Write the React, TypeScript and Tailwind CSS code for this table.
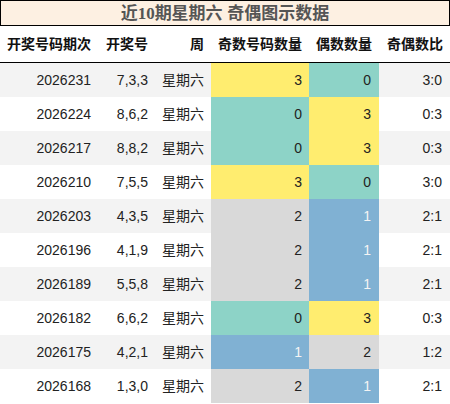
const font = { fontFamily: '"Liberation Sans", "Noto Sans CJK SC", sans-serif' };

type Row = { issue: string; nums: string; odd: number; even: number };

const rows: Row[] = [
  { issue: "2026231", nums: "7,3,3", odd: 3, even: 0 },
  { issue: "2026224", nums: "8,6,2", odd: 0, even: 3 },
  { issue: "2026217", nums: "8,8,2", odd: 0, even: 3 },
  { issue: "2026210", nums: "7,5,5", odd: 3, even: 0 },
  { issue: "2026203", nums: "4,3,5", odd: 2, even: 1 },
  { issue: "2026196", nums: "4,1,9", odd: 2, even: 1 },
  { issue: "2026189", nums: "5,5,8", odd: 2, even: 1 },
  { issue: "2026182", nums: "6,6,2", odd: 0, even: 3 },
  { issue: "2026175", nums: "4,2,1", odd: 1, even: 2 },
  { issue: "2026168", nums: "1,3,0", odd: 2, even: 1 },
];

// colour by count: 0 teal, 1 blue, 2 grey, 3 yellow
const countCls: Record<number, string> = {
  0: "bg-[#8dd3c7] text-[#222]",
  1: "bg-[#80b1d3] text-[#f4f4f4]",
  2: "bg-[#d9d9d9] text-[#222]",
  3: "bg-[#ffed6f] text-[#222]",
};

const headers = ["开奖号码期次", "开奖号", "周", "奇数号码数量", "偶数数量", "奇偶数比"];

const grid = "grid grid-cols-[98px_57px_56px_98px_70px_71px]";

export default function App() {
  return (
    <div className="w-[450px] h-[404px] bg-white overflow-hidden" style={font}>
      <div className="h-[26px] border border-black bg-[#fdf0e2] flex items-center justify-center">
        <span className="text-[17px] font-bold text-[#555] leading-none">
          近<span style={{ fontFamily: '"Liberation Serif", serif' }}>10</span>期星期六 奇偶图示数据
        </span>
      </div>

      <div className={`${grid} h-[37px] border-b border-black`}>
        {headers.map((h) => (
          <div key={h} className="flex items-center justify-end pr-[7px] text-[14px] font-bold text-[#111] whitespace-nowrap">
            {h}
          </div>
        ))}
      </div>

      {rows.map((r, i) => {
        const zebra = i % 2 === 0 ? "bg-[#f3f3f3]" : "bg-white";
        return (
          <div key={r.issue} className={`${grid} h-[34px] text-[14px] text-[#222]`}>
            <div className={`${zebra} flex items-center justify-end pr-[7px]`}>{r.issue}</div>
            <div className={`${zebra} flex items-center justify-end pr-[7px]`}>{r.nums}</div>
            <div className={`${zebra} flex items-center justify-end pr-[7px]`}>星期六</div>
            <div className={`${countCls[r.odd]} flex items-center justify-end pr-[7px]`}>{r.odd}</div>
            <div className={`${countCls[r.even]} flex items-center justify-end pr-[8px]`}>{r.even}</div>
            <div className={`${zebra} flex items-center justify-end pr-[8px]`}>
              {r.odd}:{r.even}
            </div>
          </div>
        );
      })}
    </div>
  );
}
